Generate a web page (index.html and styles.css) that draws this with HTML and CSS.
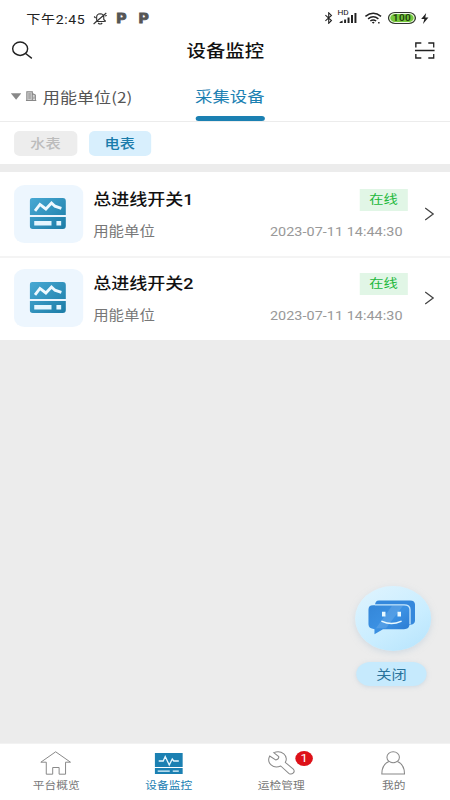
FILE: index.html
```html
<!DOCTYPE html>
<html lang="zh-CN">
<head>
<meta charset="utf-8">
<title>设备监控</title>
<link rel="stylesheet" href="styles.css">
</head>
<body>
<svg class="defs" aria-hidden="true">
  <defs>
    <linearGradient id="meter" x1="0" y1="0" x2="1" y2="1"><stop offset="0" stop-color="#48a9d4"/><stop offset="1" stop-color="#1c7ca6"/></linearGradient>
    <linearGradient id="chat" x1="0" y1="0" x2="1" y2="1"><stop offset="0" stop-color="#3486d8"/><stop offset=".5" stop-color="#3b91e3"/><stop offset="1" stop-color="#2878d0"/></linearGradient>
    <symbol id="device" viewBox="0 0 38 32" preserveAspectRatio="none">
      <path fill="url(#meter)" d="M3 0H34Q37 0 37 3V17H.5V3Q.5 0 3 0ZM.5 19H37V28Q37 31 34 31H3.500Q.5 31 .5 28Z"/>
      <path fill="none" stroke="#eff9ff" stroke-width="2.900" d="M5.800 12.800 10.800 6.400 16.800 11 22.500 5 26 8.200 32.500 10.300"/>
      <path fill="#e5f6ff" d="M5 23H22.500V27.500H5ZM27.500 23H32.300V27.500H27.500Z"/>
    </symbol>
  </defs>
</svg>
<div class="app">
  <div class="status">
    <span class="time">下午2:45</span>
    <svg class="bell" viewBox="0 0 15 13" preserveAspectRatio="none" fill="none" stroke="#333" stroke-width="1.100"><path d="M3 9.500H12M4 8.500V5Q4 2 7.500 1.700 11 2 11 5V7.500L13 9.500M5.500 11Q7.500 13 9.500 11M1 12 13.500 1M1.500 4.500 3 6M12 4 14 3.500"/></svg>
    <span class="app-mark">P</span>
    <span class="app-mark second">P</span>
    <div class="status-right">
      <svg class="bt" viewBox="0 0 9 12" preserveAspectRatio="none" fill="none" stroke="#222" stroke-width="1.100"><path d="M.8 3.200 7 8.500 4.200 11.300V.8L7 3.400.8 8.800"/></svg>
      <div class="signal"><span>HD</span>
        <svg viewBox="0 0 19 12" preserveAspectRatio="none" fill="#222"><path d="M1 11V10L4 8.500V11ZM5.500 7.500H7.500V11H5.500ZM9 5.500H11V11H9ZM12.500 3H14.500V11H12.500ZM16 1H18V11H16Z"/></svg>
      </div>
      <svg class="wifi" viewBox="0 0 18 12" preserveAspectRatio="none" fill="none" stroke="#222" stroke-width="1.500"><path d="M1 4.300Q9-2 17 4.300M3.700 6.800Q9 2.500 14.300 6.800M6 9Q9 6.800 12 9"/><path fill="#222" stroke="none" d="M7.500 10.300Q9 9 10.500 10.300L9 11.800ZM14 10h1.500v1.500H14z"/></svg>
      <span class="battery"><b>100</b></span>
      <svg class="bolt" viewBox="0 0 9 11" preserveAspectRatio="none" fill="#222"><path d="M6 0 .5 6H4L2.500 11 8.500 4.500H5Z"/></svg>
    </div>
  </div>
  <header class="header">
    <svg class="search" viewBox="0 0 22 18" preserveAspectRatio="none" fill="none" stroke="#222" stroke-width="1.500"><ellipse cx="8.800" cy="7.700" rx="7.800" ry="6.700"/><path d="M14.500 12.500 21 17.300"/></svg>
    <h1>设备监控</h1>
    <svg class="scan" viewBox="0 0 20 17" preserveAspectRatio="none" fill="none" stroke="#222" stroke-width="1.400"><path d="M1 5.500V1H6.500M13.500 1H19V5.500M1 12V16H6.500M13.500 16H19V12M0 8.500H20"/></svg>
  </header>
  <nav class="tabs">
    <div class="unit">
      <svg class="caret" viewBox="0 0 11 7" preserveAspectRatio="none" fill="#888"><path d="M.3.200H10.700L5.500 6.800Z"/></svg>
      <svg class="building" viewBox="0 0 11 10" preserveAspectRatio="none" fill="none" stroke="#888"><path fill="#ccc" d="M1 9.500V.7H6.500V9.500M6.500 2.500 9.500 4V9.500"/><path d="M0 9.500H11M2.500 3H5M2.500 5H5M2.500 7H5M8 5.500V8.500"/></svg>
      <span>用能单位<span class="count">(2)</span></span>
    </div>
    <div class="tab-active">采集设备</div>
  </nav>
  <div class="filters"><span class="chip">水表</span><span class="chip on">电表</span></div>
  <main class="list">
    <article class="card">
      <div class="tile"><svg><use href="#device"/></svg></div>
      <div class="info"><h2>总进线开关1</h2><p>用能单位</p></div>
      <div class="state"><span class="online">在线</span><time>2023-07-11 14:44:30</time></div>
      <svg class="go" viewBox="0 0 10 14" preserveAspectRatio="none" fill="none" stroke="#444" stroke-width="1.300"><path d="M1 1 9 7 1 13"/></svg>
    </article>
    <article class="card">
      <div class="tile"><svg><use href="#device"/></svg></div>
      <div class="info"><h2>总进线开关2</h2><p>用能单位</p></div>
      <div class="state"><span class="online">在线</span><time>2023-07-11 14:44:30</time></div>
      <svg class="go" viewBox="0 0 10 14" preserveAspectRatio="none" fill="none" stroke="#444" stroke-width="1.300"><path d="M1 1 9 7 1 13"/></svg>
    </article>
  </main>
  <footer class="bottom">
    <div class="item"><svg class="home" viewBox="0 0 32 24" preserveAspectRatio="none" fill="none" stroke="#888" stroke-width="1"><path d="M16 .8 31 11.200H26V23.200H19.500V16.500H13V23.200H6.500V11.200H1Z"/></svg><span>平台概览</span></div>
    <div class="item active"><svg class="monitor" viewBox="0 0 28 21" preserveAspectRatio="none"><path fill="#1b80b2" d="M0 0H28V14H0ZM0 15H28V21H0Z"/><path fill="none" stroke="#e7f7ff" stroke-width="1.300" d="M4 8H8.500L10.500 3.500 14.500 12 17.500 6 19 8H24M3 18.200H15M18 18.200H24"/></svg><span>设备监控</span></div>
    <div class="item"><svg class="wrench" viewBox="0 0 28 24" preserveAspectRatio="none" fill="none" stroke="#888" stroke-width="1"><path d="M6.500 1.600 11.500 5.500Q12 8 8.500 9L2.500 5C-1 12 6 18.500 13.500 15L21.500 22.300C24.500 24.500 28.500 21 26 18.200L18 11.500C21.500 5 14.500-1.500 6.500 1.600Z"/></svg><em>1</em><span>运检管理</span></div>
    <div class="item"><svg class="user" viewBox="0 0 26 24" preserveAspectRatio="none" fill="none" stroke="#888" stroke-width="1.100"><ellipse cx="13" cy="6.300" rx="6.600" ry="5.500"/><path d="M8.500 10.500C3.500 12.500 1 17 1 23H25C25 17 22.500 12.500 17.500 10.500"/></svg><span>我的</span></div>
  </footer>
  <aside class="assistant">
    <div class="bubble"><svg viewBox="0 0 48 36" preserveAspectRatio="none">
      <path fill="#3588dc" d="M11 .5H42Q47 .5 47 5V21Q47 25 42 25.500H20L7 6Q7 .5 11 .5Z"/>
      <path fill="url(#chat)" d="M5 5.500H36Q41.500 5.500 41.500 10V25Q41.500 30 36 30H15L6.500 35.300V30Q.5 29.500 .5 25V10Q.5 5.500 5 5.500Z"/>
      <path fill="none" stroke="#c8e7fc" stroke-width="1.300" d="M7 5H36Q42 5 42 10V25"/>
      <path fill="#fff" opacity=".12" d="M24 6H35L18 29H8Z"/>
      <path fill="#e9f9ff" d="M14 12h3.500v5H14zM29.500 12H33v5h-3.500z"/>
      <path fill="none" stroke="#e9f9ff" stroke-width="1.600" stroke-linecap="round" d="M14 22Q23.500 26.500 33 22"/>
    </svg></div>
    <button>关闭</button>
  </aside>
</div>
</body>
</html>
```
FILE: styles.css
```css
* { box-sizing: border-box; margin: 0; padding: 0; }
html, body { width: 450px; height: 800px; overflow: hidden; background: #fff; }
body { font-family: Roboto, "Noto Sans CJK SC", sans-serif; color: #111; }
svg { display: block; flex: none; }
.defs { position: absolute; width: 0; height: 0; }
/* 384px-wide layout stretched to the full display width */
.app {
  position: relative;
  display: flex;
  flex-direction: column;
  width: 384px;
  height: 800px;
  background: #ececec;
  transform: scaleX(1.171875);
  transform-origin: 0 0;
  white-space: nowrap;
}
.status { display: flex; align-items: center; height: 36px; padding-left: 22.500px; background: #fff; }
.time { width: 56.500px; font-size: 12px; letter-spacing: .5px; color: #222; }
.bell { width: 13px; height: 13px; }
.app-mark { margin-left: 7.500px; width: 11px; font: 800 13px Inter, sans-serif; color: #555; -webkit-text-stroke: .8px #555; }
.app-mark.second { margin-left: 8px; }
.status-right { display: flex; align-items: center; margin-left: auto; padding-right: 18px; }
.bt { width: 7.500px; height: 12px; margin-right: 4.500px; }
.signal { position: relative; width: 16px; margin-right: 5.500px; }
.signal svg { width: 16px; height: 12px; }
.signal span { position: absolute; left: -1px; top: -2px; font-size: 7px; line-height: 7px; }
.wifi { width: 15px; height: 12px; margin-right: 5.500px; }
.battery { display: flex; align-items: center; justify-content: center; width: 24px; height: 12px; margin-right: 4px; border: 1px solid #333; border-radius: 6px; background: #76c83c; box-shadow: inset 0 0 0 1px #f2faec; }
.battery b { font-size: 8.500px; line-height: 9px; letter-spacing: .3px; color: #234411; }
.bolt { width: 7px; height: 11px; }
.header { display: flex; align-items: center; justify-content: space-between; height: 36px; padding: 0 13px 8px 10px; background: #fff; }
.search { width: 18px; height: 18px; }
.scan { width: 17px; height: 17px; margin-top: 1px; }
h1 { margin: 3px 0 0 2.500px; font-size: 16.500px; line-height: 24px; font-weight: 500; }
.tabs { display: flex; height: 50px; padding-left: 8.500px; background: #fff; border-bottom: 1px solid #ececec; }
.unit { display: flex; align-items: center; width: 158px; padding-bottom: 1px; font-size: 14.600px; color: #555; }
.count { font-family: "Noto Sans CJK SC", sans-serif; }
.caret { width: 9.500px; height: 7px; margin-right: 3.500px; }
.building { width: 9.500px; height: 10px; margin-right: 5.500px; }
.tab-active { position: relative; display: flex; align-items: center; padding-bottom: 2px; font-size: 14.800px; color: #1b80b2; }
.tab-active::after { content: ""; position: absolute; left: 0; right: 0; bottom: 0; height: 5px; border-radius: 3px; background: #1b80b2; }
.filters { display: flex; gap: 10px; height: 42px; padding: 9px 12px; background: #fff; }
.chip { width: 53.500px; height: 25px; border-radius: 5px; background: #ededed; color: #bcbcbc; font-size: 13px; line-height: 25px; font-weight: 500; text-align: center; }
.chip.on { background: #d8effd; color: #1b7cab; }
.list { flex: 1; padding-top: 8px; }
.card { display: flex; height: 84px; padding-top: 13px; padding-left: 12px; background: #fff; }
.card + .card { border-top: 2px solid #f4f4f4; padding-top: 11px; }
.tile { display: flex; align-items: center; justify-content: center; width: 59px; height: 58px; border-radius: 9px; background: #edf6fe; }
.tile svg { width: 32px; height: 32px; margin-left: -1px; }
.info { width: 150px; margin-left: 8.500px; padding-top: 1px; }
h2 { font-size: 15.400px; line-height: 28px; font-weight: 500; }
.info p { margin-top: 6px; font-size: 13.200px; line-height: 24px; color: #777; }
.state { display: flex; flex-direction: column; align-items: flex-end; width: 118.500px; padding-top: 3.500px; }
.online { width: 41.500px; height: 22px; background: #e1f6e6; color: #22b83b; font-size: 12.200px; line-height: 23px; text-align: center; }
time { margin-top: 11.500px; font-size: 12.300px; line-height: 20px; letter-spacing: .03px; margin-right: 4.500px; color: #999; }
.go { width: 8.500px; height: 14px; margin: 22px 0 0 14px; }
.bottom { display: flex; height: 57px; background: #fff; border-top: 1px solid #f2f2f2; }
.item { position: relative; display: flex; flex-direction: column; align-items: center; justify-content: space-between; width: 96px; padding: 7px 0 6px; font-size: 10px; line-height: 16px; color: #777; }
.active { color: #1b80b2; }
.home { width: 27px; height: 24px; margin-left: -1px; }
.monitor { width: 24px; height: 21px; margin-top: 2px; }
.wrench { width: 24px; height: 24px; margin-left: -1px; }
.user { width: 21px; height: 24px; margin-left: -1px; }
.item em { position: absolute; left: 60px; top: 7px; width: 15px; height: 15px; border-radius: 50%; background: #dd1118; color: #fff; font-size: 11px; line-height: 15px; font-style: normal; text-align: center; }
.assistant { position: absolute; left: 302.500px; top: 586px; display: flex; flex-direction: column; gap: 11px; align-items: center; }
.bubble { display: flex; align-items: center; justify-content: center; width: 65px; height: 65px; padding: 0 2px 2px 0; border-radius: 50%; background: linear-gradient(145deg, #e0f4fe, #c9edff 60%, #b5e3fc); box-shadow: 0 2px 6px #b8cbd988; }
.bubble svg { width: 41px; height: 35px; }
button { width: 60px; height: 24px; margin-left: -2px; border: 0; border-radius: 12px; background: #c6eafd; box-shadow: 0 1px 4px #b8cbd988; color: #29739b; font: 13px/24px "Noto Sans CJK SC", sans-serif; }
```
